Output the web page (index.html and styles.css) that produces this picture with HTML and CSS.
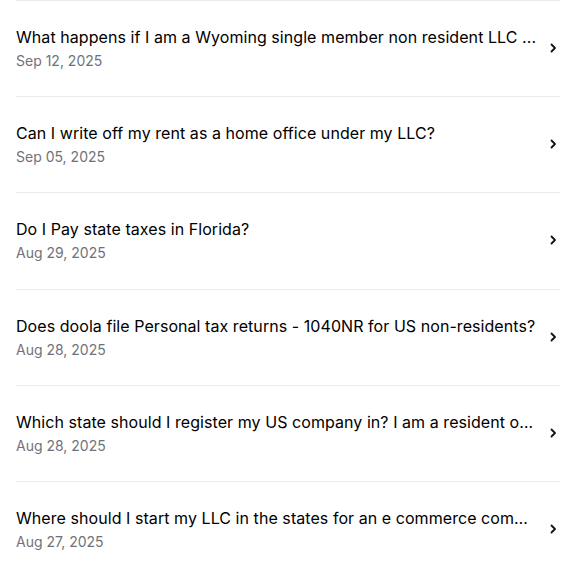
FILE: index.html
```html
<!DOCTYPE html>
<html lang="en">
<head>
    <meta charset="UTF-8">
    <meta name="viewport" content="width=device-width, initial-scale=1.0">
    <title>Questions</title>
    <link rel="stylesheet" href="styles.css">
</head>
<body>
    <div class="list">
        <a class="row" href="#">
            <div class="info">
                <div class="title">What happens if I am a Wyoming single member non resident LLC ...</div>
                <div class="date">Sep 12, 2025</div>
            </div>
            <svg class="chev" viewBox="0 0 16 16"><path d="M7.5 4.5l3.5 3.5-3.5 3.5"/></svg>
        </a>
        <a class="row" href="#">
            <div class="info">
                <div class="title">Can I write off my rent as a home office under my LLC?</div>
                <div class="date">Sep 05, 2025</div>
            </div>
            <svg class="chev" viewBox="0 0 16 16"><path d="M7.5 4.5l3.5 3.5-3.5 3.5"/></svg>
        </a>
        <a class="row" href="#">
            <div class="info">
                <div class="title">Do I Pay state taxes in Florida?</div>
                <div class="date">Aug 29, 2025</div>
            </div>
            <svg class="chev" viewBox="0 0 16 16"><path d="M7.5 4.5l3.5 3.5-3.5 3.5"/></svg>
        </a>
        <a class="row" href="#">
            <div class="info">
                <div class="title">Does doola file Personal tax returns - 1040NR for US non-residents?</div>
                <div class="date">Aug 28, 2025</div>
            </div>
            <svg class="chev" viewBox="0 0 16 16"><path d="M7.5 4.5l3.5 3.5-3.5 3.5"/></svg>
        </a>
        <a class="row" href="#">
            <div class="info">
                <div class="title">Which state should I register my US company in? I am a resident of India</div>
                <div class="date">Aug 28, 2025</div>
            </div>
            <svg class="chev" viewBox="0 0 16 16"><path d="M7.5 4.5l3.5 3.5-3.5 3.5"/></svg>
        </a>
        <a class="row" href="#">
            <div class="info">
                <div class="title">Where should I start my LLC in the states for an e commerce company?</div>
                <div class="date">Aug 27, 2025</div>
            </div>
            <svg class="chev" viewBox="0 0 16 16"><path d="M7.5 4.5l3.5 3.5-3.5 3.5"/></svg>
        </a>
    </div>
</body>
</html>
```
FILE: styles.css
```css
body {
    font-family: Inter, "Noto Sans", sans-serif;
    background: #ffffff;
    margin: 0;
    padding: 0 24px 0 16px;
}

.list {
    display: flex;
    flex-direction: column;
}

.row {
    display: flex;
    align-items: center;
    gap: 7.5px;
    padding: 24px 0 25.2px;
    border-top: 1px solid #ebebeb;
    text-decoration: none;
}

.info {
    flex: 1;
    min-width: 0;
}

.title {
    font-size: 16px;
    line-height: 24px;
    letter-spacing: 0.06px;
    color: #000000;
    white-space: nowrap;
    overflow: hidden;
    text-overflow: ellipsis;
    margin-bottom: 2px;
}

.date {
    font-size: 14px;
    line-height: 20px;
    color: #71717a;
}

.chev {
    width: 16px;
    height: 16px;
    flex-shrink: 0;
    fill: none;
    stroke: #111111;
    stroke-width: 1.8;
    stroke-linecap: round;
    stroke-linejoin: round;
}
```
